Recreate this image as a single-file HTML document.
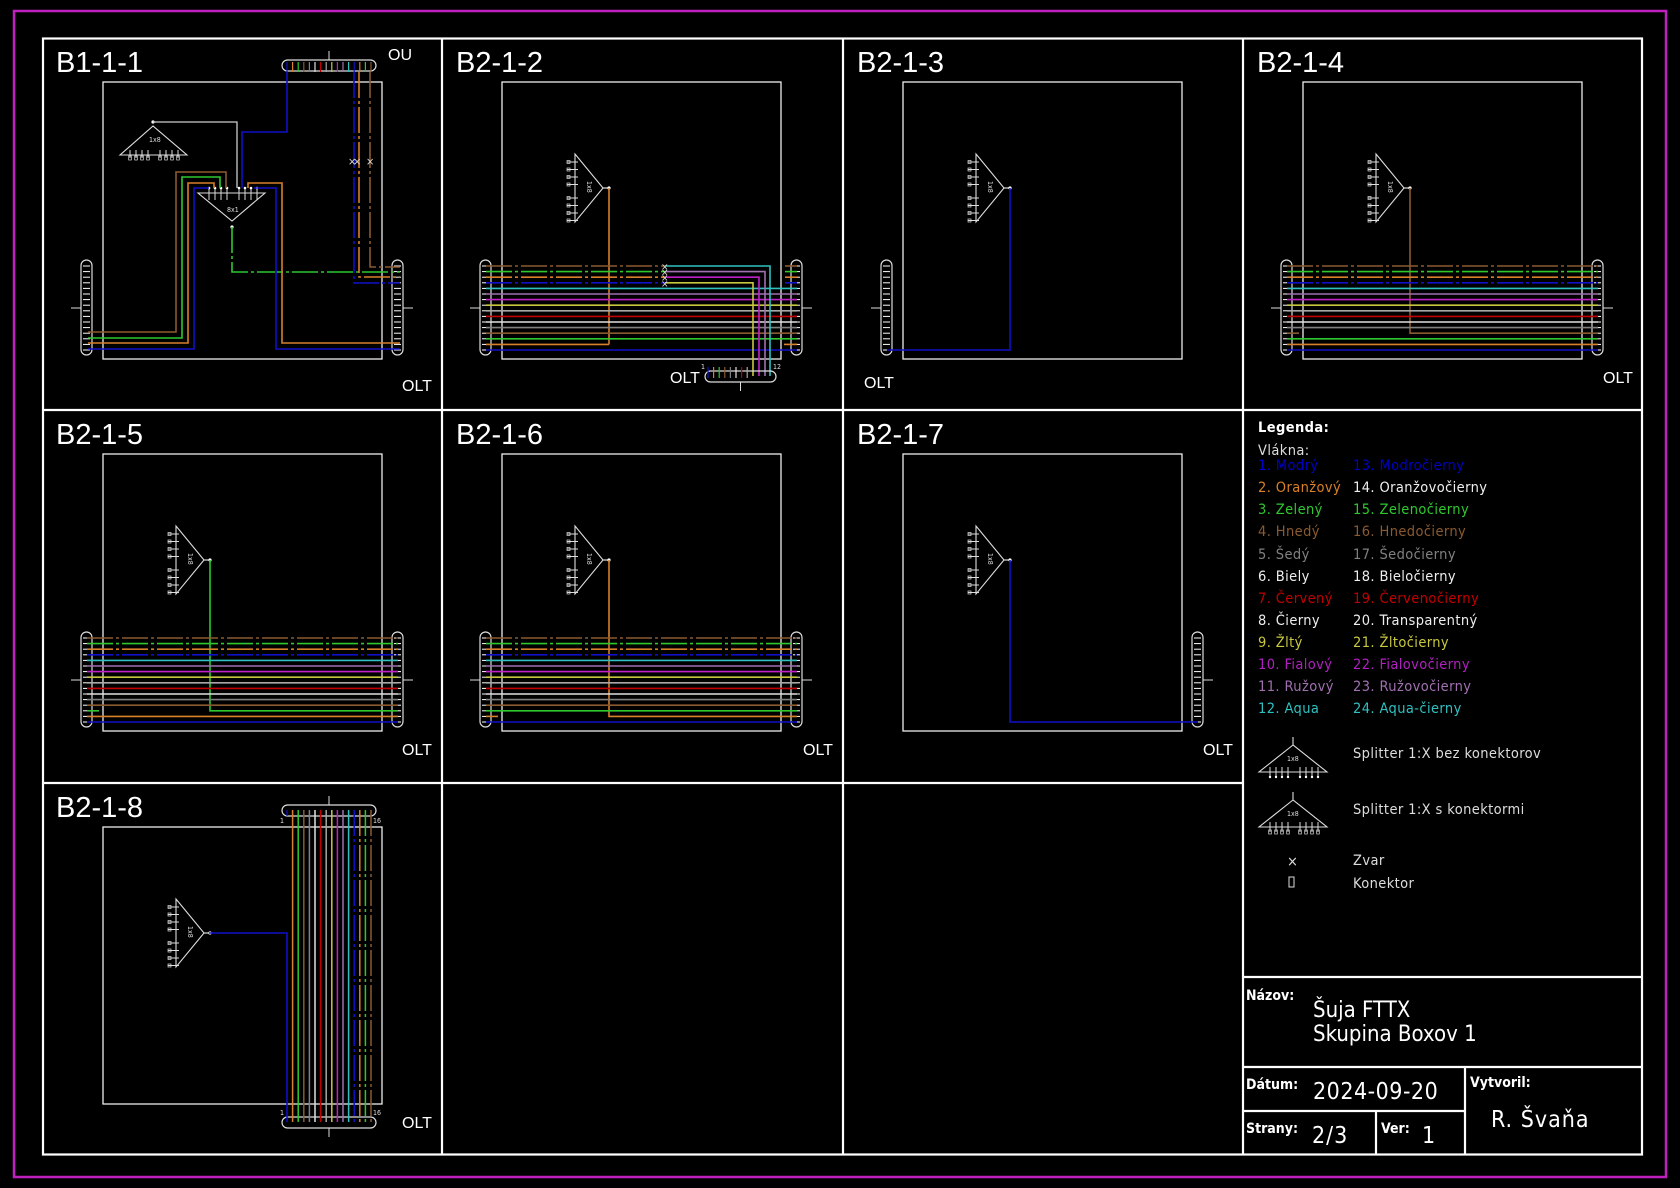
<!DOCTYPE html>
<html><head><meta charset="utf-8"><style>
html,body{margin:0;padding:0;background:#000;}
svg{display:block}
text{font-family:"DejaVu Sans Condensed","DejaVu Sans","Liberation Sans",sans-serif;}
.t text{font-family:"Liberation Sans",Arial,sans-serif;fill:#fff}
.l text{font-size:14.5px;letter-spacing:0.4px}
</style></head><body>
<svg id="s" xmlns="http://www.w3.org/2000/svg" width="1680" height="1188" viewBox="0 0 1680 1188">
<rect width="1680" height="1188" fill="#000"/>
<rect x="14" y="11" width="1652" height="1166" fill="none" stroke="#c020c0" stroke-width="2.5"/>
<g stroke="#fff" stroke-width="2.2" fill="none">
<rect x="43" y="38.5" width="1599" height="1116"/>
<line x1="442" y1="38" x2="442" y2="1155"/><line x1="843" y1="38" x2="843" y2="1155"/><line x1="1243" y1="38" x2="1243" y2="1155"/>
<line x1="43" y1="410" x2="1642" y2="410"/><line x1="43" y1="783" x2="1243" y2="783"/>
<line x1="1243" y1="977" x2="1642" y2="977"/><line x1="1243" y1="1067" x2="1642" y2="1067"/><line x1="1243" y1="1111" x2="1465" y2="1111"/>
<line x1="1465" y1="1067" x2="1465" y2="1155"/><line x1="1376" y1="1111" x2="1376" y2="1155"/>
</g>
<g id="d"></g>
<!-- titles -->
<g class="t" font-size="29">
<text x="56" y="72">B1-1-1</text><text x="456" y="72">B2-1-2</text><text x="857" y="72">B2-1-3</text><text x="1257" y="72">B2-1-4</text>
<text x="56" y="444">B2-1-5</text><text x="456" y="444">B2-1-6</text><text x="857" y="444">B2-1-7</text>
<text x="56" y="817">B2-1-8</text>
</g>
<g class="t" font-size="16">
<text x="388" y="60">OU</text><text x="402" y="391">OLT</text><text x="670" y="383">OLT</text><text x="864" y="388">OLT</text><text x="1603" y="383">OLT</text>
<text x="402" y="755">OLT</text><text x="803" y="755">OLT</text><text x="1203" y="755">OLT</text><text x="402" y="1128">OLT</text>
</g>
<!-- legend -->
<g class="l">
<text x="1258" y="432" fill="#fff" font-weight="bold">Legenda:</text>
<text x="1258" y="455" fill="#ddd">Vlákna:</text>
<text x="1258" y="470" fill="#0000c8">1. Modrý</text><text x="1353" y="470" fill="#0000c8">13. Modročierny</text>
<text x="1258" y="492" fill="#d8802a">2. Oranžový</text><text x="1353" y="492" fill="#eee">14. Oranžovočierny</text>
<text x="1258" y="514" fill="#2ec82e">3. Zelený</text><text x="1353" y="514" fill="#2ec82e">15. Zelenočierny</text>
<text x="1258" y="536" fill="#8a5a30">4. Hnedý</text><text x="1353" y="536" fill="#8a5a30">16. Hnedočierny</text>
<text x="1258" y="559" fill="#808080">5. Šedý</text><text x="1353" y="559" fill="#808080">17. Šedočierny</text>
<text x="1258" y="581" fill="#eee">6. Biely</text><text x="1353" y="581" fill="#eee">18. Bieločierny</text>
<text x="1258" y="603" fill="#c00000">7. Červený</text><text x="1353" y="603" fill="#c00000">19. Červenočierny</text>
<text x="1258" y="625" fill="#eee">8. Čierny</text><text x="1353" y="625" fill="#eee">20. Transparentný</text>
<text x="1258" y="647" fill="#c8c840">9. Žltý</text><text x="1353" y="647" fill="#c8c840">21. Žltočierny</text>
<text x="1258" y="669" fill="#b020c0">10. Fialový</text><text x="1353" y="669" fill="#b020c0">22. Fialovočierny</text>
<text x="1258" y="691" fill="#a070b0">11. Ružový</text><text x="1353" y="691" fill="#a070b0">23. Ružovočierny</text>
<text x="1258" y="713" fill="#30c0c0">12. Aqua</text><text x="1353" y="713" fill="#30c0c0">24. Aqua-čierny</text>
<text x="1353" y="758" fill="#ddd">Splitter 1:X bez konektorov</text>
<text x="1353" y="814" fill="#ddd">Splitter 1:X s konektormi</text>
<text x="1353" y="865" fill="#ddd">Zvar</text>
<text x="1353" y="888" fill="#ddd">Konektor</text>
<text x="1287" y="866" fill="#ddd">×</text>
<rect x="1289" y="877" width="5" height="10" fill="none" stroke="#ddd" stroke-width="1"/>
</g>
<!-- title block -->
<g fill="#fff">
<text x="1246" y="1000" font-size="14" font-weight="bold">Názov:</text>
<text x="1313" y="1017" font-size="22">Šuja FTTX</text>
<text x="1313" y="1041" font-size="22">Skupina Boxov 1</text>
<text x="1246" y="1089" font-size="14" font-weight="bold">Dátum:</text>
<text x="1313" y="1099" font-size="23" letter-spacing="0.5">2024-09-20</text>
<text x="1470" y="1087" font-size="14" font-weight="bold">Vytvoril:</text>
<text x="1491" y="1127" font-size="23" letter-spacing="1">R. Švaňa</text>
<text x="1246" y="1133" font-size="14" font-weight="bold">Strany:</text>
<text x="1312" y="1143" font-size="23" letter-spacing="1">2/3</text>
<text x="1381" y="1133" font-size="14" font-weight="bold">Ver:</text>
<text x="1422" y="1143" font-size="23">1</text>
</g>
</svg>
<script>
var NS="http://www.w3.org/2000/svg",G=document.getElementById('d');
var C=['#1010c8','#d8802a','#2ec82e','#8a5a30','#808080','#e0e0e0','#c00000','#a8a8a8','#c8c840','#c020c8','#a070b0','#30c0c0','#1010c8','#d8802a','#2ec82e','#8a5a30'];
var DASH="26,3,3,3";
function el(t,a){var e=document.createElementNS(NS,t);for(var k in a)e.setAttribute(k,a[k]);G.appendChild(e);return e;}
function L(x1,y1,x2,y2,c,w,d){var a={x1:x1,y1:y1,x2:x2,y2:y2,stroke:c,'stroke-width':w||1.6};if(d)a['stroke-dasharray']=d;el('line',a);}
function P(d,c,w,da){var a={d:d,stroke:c,fill:'none','stroke-width':w||1.6};if(da)a['stroke-dasharray']=da;el('path',a);}
function fc(i){return C[i-1];} function fd(i){return i>12?DASH:null;}
function box(ox,oy){el('rect',{x:ox+60,y:oy+44,width:279,height:277,fill:'none',stroke:'#eee','stroke-width':1.3});}
function fy(oy,i){return oy+312-(i-1)*5.6;}
function vpill(x,oy,side){el('rect',{x:x,y:oy+222,width:11,height:95,rx:5.5,fill:'none',stroke:'#ddd','stroke-width':1.2});
 for(var i=1;i<=16;i++)L(x+2,fy(oy,i),x+9,fy(oy,i),'#fff',1);
 if(side<0)L(x-10,oy+270,x,oy+270,'#ddd',1);else L(x+11,oy+270,x+21,oy+270,'#ddd',1);}
function hpill(x1,x2,y,n,up){el('rect',{x:x1,y:y,width:x2-x1,height:11,rx:5.5,fill:'none',stroke:'#ddd','stroke-width':1.2});
 var m=(x1+x2)/2; if(up)L(m,y-9,m,y,'#ddd',1);else L(m,y+11,m,y+20,'#ddd',1);}
function splR(ox,oy){var x=ox+133,y=oy+116;
 P('M'+x+' '+y+' L'+(ox+161)+' '+(oy+150)+' L'+x+' '+(oy+184)+' Z','#ddd',1.1);
 for(var k=0;k<8;k++){var yy=oy+124+k*7.5+(k>3?6:0);L(x-8,yy,x+3,yy,'#ddd',1);el('rect',{x:x-8,y:yy-1.5,width:3,height:3,fill:'none',stroke:'#ddd','stroke-width':0.7});}
 L(ox+161,oy+150,ox+167,oy+150,'#ddd',1.2);el('circle',{cx:ox+167,cy:oy+150,r:1.6,fill:'#fff'});
 var t=el('text',{x:0,y:0,fill:'#ddd','font-size':7,transform:'translate('+(ox+145)+' '+(oy+143)+') rotate(90)'});t.textContent='1x8';}
function full(ox,oy,drop){box(ox,oy);vpill(ox+38,oy,-1);vpill(ox+349,oy,1);splR(ox,oy);
 for(var i=1;i<=16;i++){var y=fy(oy,i);
  if(i==drop){L(ox+44,y,ox+56,y,fc(i));P('M'+(ox+167)+' '+(oy+150)+' V'+y+' H'+(ox+355),fc(i));}
  else L(ox+44,y,ox+355,y,fc(i),1.6,fd(i));}}
// B1-1-1
(function(){var ox=43,oy=38;box(ox,oy);vpill(ox+38,oy,-1);vpill(ox+349,oy,1);
 hpill(282,376,60,16,true);for(var i=1;i<=16;i++){var x=287+(i-1)*5.6;L(x,62,x,72,fc(i),1.2);}
 P('M153 126 L120 155 L187 155 Z','#ddd',1.1);el('circle',{cx:153,cy:122,r:1.6,fill:'#fff'});
 for(var k=0;k<8;k++){var x=130+k*6+(k>3?6:0);L(x,150,x,158,'#ddd',1);el('rect',{x:x-1.3,y:156,width:2.6,height:4,fill:'none',stroke:'#ddd','stroke-width':0.7});}
 var t=el('text',{x:149,y:142,fill:'#ddd','font-size':7});t.textContent='1x8';
 P('M198 193 L265 193 L232 221 Z','#ddd',1.1);
 for(var k=0;k<8;k++){var x=209+k*6+(k>3?6:0);L(x,187,x,200,'#ddd',1);el('circle',{cx:x,cy:188,r:1.3,fill:'#fff'});}
 t=el('text',{x:227,y:212,fill:'#ddd','font-size':7});t.textContent='8x1';
 el('circle',{cx:232,cy:227,r:1.6,fill:'#fff'});
 P('M232 227 V272 H400','#2ec82e',1.6,DASH);
 P('M153 122 H237 V188','#ccc',1.3);
 P('M287 72 V132 H242 V188','#1010c8');
 P('M226 188 V172 H176 V332 H88','#8a5a30');
 P('M220 188 V177 H182 V338 H88','#2ec82e');
 P('M214 188 V183 H188 V343 H88','#d8802a');
 P('M209 188 H194 V349 H88','#1010c8');
 P('M248 188 V183 H282 V343 H400','#d8802a');
 P('M254 188 V188 H276 V349 H400','#1010c8');
 P('M354 72 V283 H400','#1010c8',1.6,DASH);
 P('M359 72 V277 H400','#d8802a',1.6,DASH);
 P('M370 72 V267 H400','#8a5a30',1.6,DASH);
 [352,357,370].forEach(function(x){var tt=el('text',{x:x-4,y:165,fill:'#ddd','font-size':11});tt.textContent='×';});
})();
// B2-1-2
(function(){var ox=442,oy=38;box(ox,oy);vpill(ox+38,oy,-1);vpill(ox+349,oy,1);splR(ox,oy);
 for(var i=1;i<=12;i++){var y=fy(oy,i);if(i==2){L(ox+44,y,ox+167,y,fc(2));L(ox+342,y,ox+355,y,fc(2));P('M'+(ox+167)+' '+(oy+150)+' V'+y,fc(2));}else L(ox+44,y,ox+355,y,fc(i));}
 var xs={16:328,15:323,14:317,13:311},cc={16:'#30c0c0',15:'#a070b0',14:'#c020c8',13:'#c8c840'};
 for(var i=13;i<=16;i++){var y=fy(oy,i);L(ox+44,y,ox+223,y,fc(i),1.6,DASH);L(ox+343,y,ox+355,y,fc(i),1.6,DASH);
  P('M'+(ox+223)+' '+y+' H'+(ox+xs[i])+' V'+(oy+338),cc[i]);var tt=el('text',{x:ox+219,y:y+4,fill:'#ddd','font-size':10});tt.textContent='×';}
 hpill(ox+263,ox+334,oy+333,12,false);
 for(var k=0;k<8;k++){var x=ox+266+k*5.6;L(x,oy+329,x,oy+340,fc(k+1),1.2);}
 var a=el('text',{x:ox+259,y:oy+331,fill:'#ddd','font-size':7});a.textContent='1';
 a=el('text',{x:ox+331,y:oy+331,fill:'#ddd','font-size':7});a.textContent='12';
})();
// B2-1-3
(function(){var ox=843,oy=38;box(ox,oy);vpill(ox+38,oy,-1);splR(ox,oy);P('M'+(ox+167)+' '+(oy+150)+' V'+fy(oy,1)+' H'+(ox+44),fc(1));})();
full(1243,38,4);full(43,410,3);full(442,410,2);
// B2-1-7
(function(){var ox=843,oy=410;box(ox,oy);vpill(ox+349,oy,1);splR(ox,oy);P('M'+(ox+167)+' '+(oy+150)+' V'+fy(oy,1)+' H'+(ox+355),fc(1));})();
// B2-1-8
(function(){var ox=43,oy=783;box(ox,oy);splR(ox,oy);hpill(282,376,805,16,true);hpill(282,376,1117,16,false);
 for(var i=1;i<=16;i++){var x=287+(i-1)*5.6;if(i==1){P('M209 933 H287 V1122','#1010c8');L(x,810,x,816,fc(1),1.2);}else L(x,810,x,1122,fc(i),1.5,i>12?DASH:null);}
 var a=el('text',{x:280,y:823,fill:'#ddd','font-size':7});a.textContent='1';a=el('text',{x:373,y:823,fill:'#ddd','font-size':7});a.textContent='16';
 a=el('text',{x:280,y:1115,fill:'#ddd','font-size':7});a.textContent='1';a=el('text',{x:373,y:1115,fill:'#ddd','font-size':7});a.textContent='16';
})();
// legend splitter icons
(function(){[[745,false],[800,true]].forEach(function(p){var y=p[0];
 P('M1293 '+(y-8)+' V'+y+' M1293 '+y+' L1259 '+(y+27)+' L1327 '+(y+27)+' Z','#ddd',1.1);
 var t=el('text',{x:1287,y:y+16,fill:'#ddd','font-size':7});t.textContent='1x8';
 for(var k=0;k<8;k++){var x=1270+k*6+(k>3?6:0);L(x,y+22,x,y+32,'#ddd',1);
  if(p[1])el('rect',{x:x-1.3,y:y+30,width:2.6,height:4,fill:'none',stroke:'#ddd','stroke-width':0.7});else el('circle',{cx:x,cy:y+32,r:1.2,fill:'#fff'});}
});})();
</script>
</body></html>
